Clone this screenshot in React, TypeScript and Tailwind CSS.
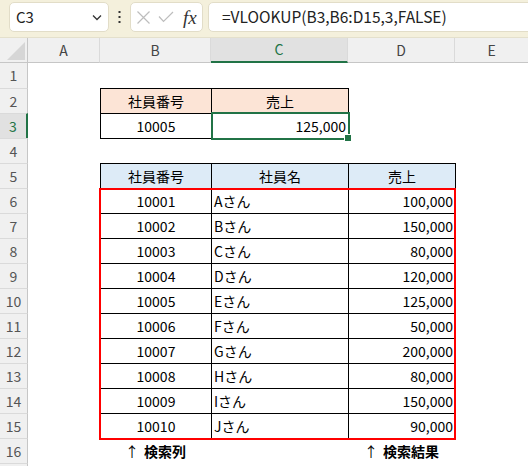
import React from "react";

const font = { fontFamily: '"Noto Sans CJK JP", "Noto Sans", sans-serif' };

const data = [
  ["10001", "Aさん", "100,000"],
  ["10002", "Bさん", "150,000"],
  ["10003", "Cさん", "80,000"],
  ["10004", "Dさん", "120,000"],
  ["10005", "Eさん", "125,000"],
  ["10006", "Fさん", "50,000"],
  ["10007", "Gさん", "200,000"],
  ["10008", "Hさん", "80,000"],
  ["10009", "Iさん", "150,000"],
  ["10010", "Jさん", "90,000"],
];

function RowHead({ n, sel }: { n?: number; sel?: boolean }) {
  return (
    <div
      className={
        "w-[28px] shrink-0 h-full flex items-center justify-center text-[14px] " +
        (n !== 1 ? "border-t border-t-[#dadada] " : "") +
        (sel
          ? "bg-[#e1e1e1] text-[#217346] border-r-2 border-r-[#217346]"
          : "bg-[#f0f0f0] text-[#555] border-r border-r-[#c6c6c6]")
      }
    >
      {n}
    </div>
  );
}

function Row({ children }: { children?: React.ReactNode }) {
  return <div className="flex h-[25px] text-[14px] text-black">{children}</div>;
}

export default function App() {
  return (
    <div className="w-[528px] h-[466px] bg-white overflow-hidden relative" style={font}>
      {/* Formula bar */}
      <div className="h-[38px] bg-[#f4f0dc] flex items-start pt-[2px] overflow-hidden border-b border-[#e4e0cc]">
        <div className="ml-[9px] w-[100px] shrink-0 h-[30px] bg-white rounded-[5px] border border-[#e2ddc8] flex items-center justify-between pl-[6px] pr-[6px]">
          <span className="text-[15px] text-[#222]">C3</span>
          <svg width="10" height="7" viewBox="0 0 10 7">
            <polyline points="1,1.5 5,5.5 9,1.5" fill="none" stroke="#333" strokeWidth="1.3" />
          </svg>
        </div>
        <div className="w-[21px] shrink-0 h-[30px] flex items-center justify-center">
          <svg width="3" height="12" viewBox="0 0 3 12">
            <rect x="0.5" y="0" width="2" height="2" fill="#333" />
            <rect x="0.5" y="5" width="2" height="2" fill="#333" />
            <rect x="0.5" y="10" width="2" height="2" fill="#333" />
          </svg>
        </div>
        <div className="w-[73px] shrink-0 h-[30px] bg-white rounded-[5px] border border-[#e2ddc8] flex items-center pl-[6px]">
          <svg width="13" height="13" viewBox="0 0 13 13">
            <path d="M0.5 0.5 L12.5 12.5 M12.5 0.5 L0.5 12.5" stroke="#bdbdbd" strokeWidth="1.2" fill="none" />
          </svg>
          <svg width="16" height="12" viewBox="0 0 16 12" className="ml-[8px]">
            <polyline points="1,5.5 5.5,10.5 15,1" stroke="#bdbdbd" strokeWidth="1.2" fill="none" />
          </svg>
          <span
            className="ml-[9px] text-[19px] italic text-[#333] leading-none"
            style={{ fontFamily: '"Liberation Serif", "DejaVu Serif", serif' }}
          >
            fx
          </span>
        </div>
        <div className="ml-[5px] w-[340px] shrink-0 h-[30px] bg-white rounded-[5px] border border-[#e2ddc8] flex items-center pl-[13px]">
          <span className="text-[15.5px] text-[#222]">=VLOOKUP(B3,B6:D15,3,FALSE)</span>
        </div>
      </div>

      {/* Column headers */}
      <div className="flex h-[25px] text-[14px] text-[#444]">
        <div className="w-[28px] shrink-0 bg-[#f0f0f0] border-r border-r-[#c6c6c6] border-b border-b-[#c6c6c6]">
          <svg width="27" height="24" viewBox="0 0 27 24">
            <polygon points="25,4 25,22 7,22" fill="#d6d6d6" />
          </svg>
        </div>
        <div className="w-[72px] shrink-0 bg-[#f0f0f0] border-r border-r-[#dadada] border-b border-b-[#c6c6c6] flex items-center justify-center">A</div>
        <div className="w-[111px] shrink-0 bg-[#f0f0f0] border-r border-r-[#dadada] border-b border-b-[#c6c6c6] flex items-center justify-center">B</div>
        <div className="w-[137px] shrink-0 bg-[#e1e1e1] text-[#217346] border-r border-r-[#dadada] border-b-2 border-b-[#217346] flex items-center justify-center">C</div>
        <div className="w-[107px] shrink-0 bg-[#f0f0f0] border-r border-r-[#dadada] border-b border-b-[#c6c6c6] flex items-center justify-center">D</div>
        <div className="w-[73px] shrink-0 bg-[#f0f0f0] border-b border-b-[#c6c6c6] flex items-center justify-center">E</div>
      </div>

      {/* Sheet */}
      <div className="relative">
        <Row>
          <RowHead n={1} />
        </Row>
        <Row>
          <RowHead n={2} />
          <div className="w-[72px] shrink-0" />
          <div className="w-[111px] shrink-0 bg-[#fce4d6] border-t border-l border-black flex items-center justify-center">社員番号</div>
          <div className="w-[137px] shrink-0 bg-[#fce4d6] border-t border-l border-black flex items-center justify-center">売上</div>
          <div className="w-[107px] shrink-0 border-l border-black" />
        </Row>
        <Row>
          <RowHead n={3} sel />
          <div className="w-[72px] shrink-0" />
          <div className="w-[111px] shrink-0 border-t border-l border-black flex items-center justify-center">10005</div>
          <div className="w-[137px] shrink-0 border-t border-l border-black flex items-center justify-end pr-[2px]">125,000</div>
          <div className="w-[107px] shrink-0 border-l border-black" />
        </Row>
        <Row>
          <RowHead n={4} />
          <div className="w-[72px] shrink-0" />
          <div className="w-[111px] shrink-0 border-t border-black" />
          <div className="w-[137px] shrink-0 border-t border-black" />
        </Row>
        <Row>
          <RowHead n={5} />
          <div className="w-[72px] shrink-0" />
          <div className="w-[111px] shrink-0 bg-[#ddebf7] border-t border-l border-black flex items-center justify-center">社員番号</div>
          <div className="w-[137px] shrink-0 bg-[#ddebf7] border-t border-l border-black flex items-center justify-center">社員名</div>
          <div className="w-[107px] shrink-0 bg-[#ddebf7] border-t border-l border-black flex items-center justify-center">売上</div>
          <div className="w-[73px] shrink-0 border-l border-black" />
        </Row>
        {data.map((r, i) => (
          <Row key={r[0]}>
            <RowHead n={6 + i} />
            <div className="w-[72px] shrink-0" />
            <div className="w-[111px] shrink-0 border-t border-l border-black flex items-center justify-center">{r[0]}</div>
            <div className="w-[137px] shrink-0 border-t border-l border-black flex items-center pl-[2px]">{r[1]}</div>
            <div className="w-[107px] shrink-0 border-t border-l border-black flex items-center justify-end pr-[2px]">{r[2]}</div>
            <div className="w-[73px] shrink-0 border-l border-black" />
          </Row>
        ))}
        <Row>
          <RowHead n={16} />
          <div className="w-[72px] shrink-0" />
          <div className="w-[111px] shrink-0 border-t border-black flex items-center justify-center">
            <span>↑</span>
            <span className="ml-[5px] font-bold">検索列</span>
          </div>
          <div className="w-[137px] shrink-0 border-t border-black" />
          <div className="w-[107px] shrink-0 border-t border-black flex items-center justify-center">
            <span>↑</span>
            <span className="ml-[5px] font-bold">検索結果</span>
          </div>
        </Row>
        <Row>
          <RowHead />
        </Row>

        {/* red rectangle shape */}
        <div className="absolute left-[99px] top-[125px] w-[357px] h-[252px] border-2 border-[#ff0000] pointer-events-none" />
        {/* selection */}
        <div className="absolute left-[211px] top-[49px] w-[139px] h-[28px] border-2 border-[#217346] pointer-events-none" />
        <div className="absolute left-[344px] top-[71px] w-[8px] h-[8px] bg-[#217346] border border-white" />
      </div>
    </div>
  );
}
